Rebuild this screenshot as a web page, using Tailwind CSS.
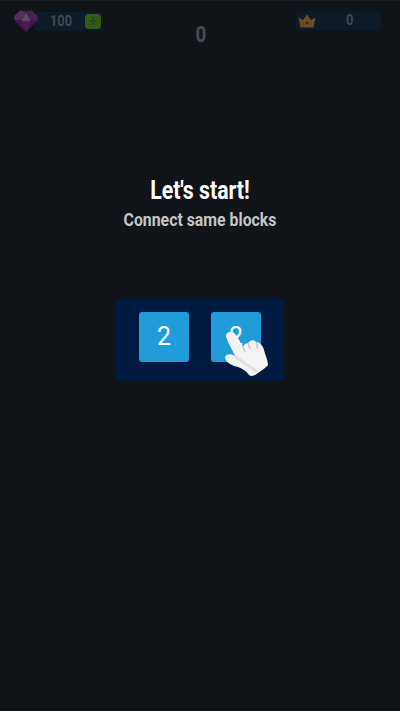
<!DOCTYPE html>
<html>
<head>
<meta charset="utf-8">
<script src="https://cdn.jsdelivr.net/npm/@tailwindcss/browser@4"></script>
</head>
<body class="m-0 bg-[#101418]">
<div class="relative w-[400px] h-[711px] overflow-hidden bg-[#101418] border-t border-[#1a1e22] font-['Roboto',sans-serif]">
  <div class="flex items-start justify-between pl-[14px] pr-[19px] pt-[9px] h-[24px]">
    <div class="flex items-center">
      <svg class="w-[24px] h-[22px] shrink-0 z-10" viewBox="0 0 24 22">
        <path d="M6 0.500H18L23.500 6L23 11L12 22L1 11L0.500 6Z" fill="#44174c"/>
        <path d="M6 0.500L12 3L8 10H0.500V6Z" fill="#54305c"/>
        <path d="M12 3L18 0.500L23.500 6V10H16Z" fill="#4a2053"/>
        <path d="M12 3L16.500 11H7.500Z" fill="#57505e"/>
        <path d="M7.500 11H16.500L12 21Z" fill="#511959"/>
      </svg>
      <div class="flex items-center justify-between -ml-[3px] w-[68px] h-[19px] rounded bg-[#0d1a28] pl-[9px] pr-[2px]">
        <span class="text-[15px] leading-none font-bold text-[#46494c] w-[34px] text-center scale-x-[0.85]">100</span>
        <span class="flex w-[16px] h-[15px] items-center justify-center rounded-sm bg-[#375a12] text-[15px] font-black leading-none text-[#1d4a2a]">+</span>
      </div>
    </div>
    <div class="flex items-center w-[85px] h-[19px] rounded bg-[#0d1a28] pl-[2px] mt-[1px]">
      <svg class="w-[18px] h-[14px] shrink-0" viewBox="0 0 18 14">
        <path d="M0.500 3.500L5 6L9 0.500L13 6L17.500 3.500L15.500 13.500H2.500Z" fill="#6f4c1c"/>
        <circle cx="9" cy="9" r="1.500" fill="#3a1f50"/>
      </svg>
      <span class="flex-1 text-center text-[15px] leading-none font-bold text-[#46494c] scale-x-[0.85] pl-[3px]">0</span>
    </div>
  </div>
  <div class="mt-0 text-center text-[22px] leading-[20px] font-bold text-[#484b4e] pl-[2px] scale-x-[0.85]">0</div>

  <div class="mt-[132px] text-center text-[25px] leading-[28px] font-bold text-white scale-x-[0.85]">Let's start!</div>
  <div class="mt-[3px] text-center text-[18px] leading-[24px] font-bold text-[#c4c5c6] scale-x-[0.88]">Connect same blocks</div>

  <div class="relative mx-auto mt-[67px] flex h-[82px] w-[168px] items-center justify-center gap-[22px] bg-[#001a42] pb-[6px]">
    <div class="flex h-[50px] w-[50px] items-center justify-center rounded-[3px] bg-[#229bd9] text-[25px] text-white">2</div>
    <div class="flex h-[50px] w-[50px] items-center justify-center rounded-[3px] bg-[#229bd9] text-[25px] text-white">2</div>
    <svg class="absolute left-[109px] top-[33px] w-[44px] h-[45px]" viewBox="0 0 44 45">
      <path d="M1 5C0 1 5 -1 8 0C11 2 15 9 18 15C19 12 21 11 23 11C25 8 29 7 31 10C34 10 38 13 39 18C40 23 43 28 43 33C41 36 37 38 33 41C30 44 26 45 24 43C21 39 18 37 13 35C8 34 1 31 0 26C0 22 5 21 10 24C7 17 3 11 1 5Z" fill="#f3f3f3"/>
      <path d="M23 11L25 17M31 10L33 17M18 15L20 20" stroke="#c6c8ca" stroke-width="1.500" fill="none"/>
      <path d="M10 24C15 29 24 33 32 40" stroke="#dcdee0" stroke-width="2.500" fill="none"/>
    </svg>
  </div>
</div>
</body>
</html>
